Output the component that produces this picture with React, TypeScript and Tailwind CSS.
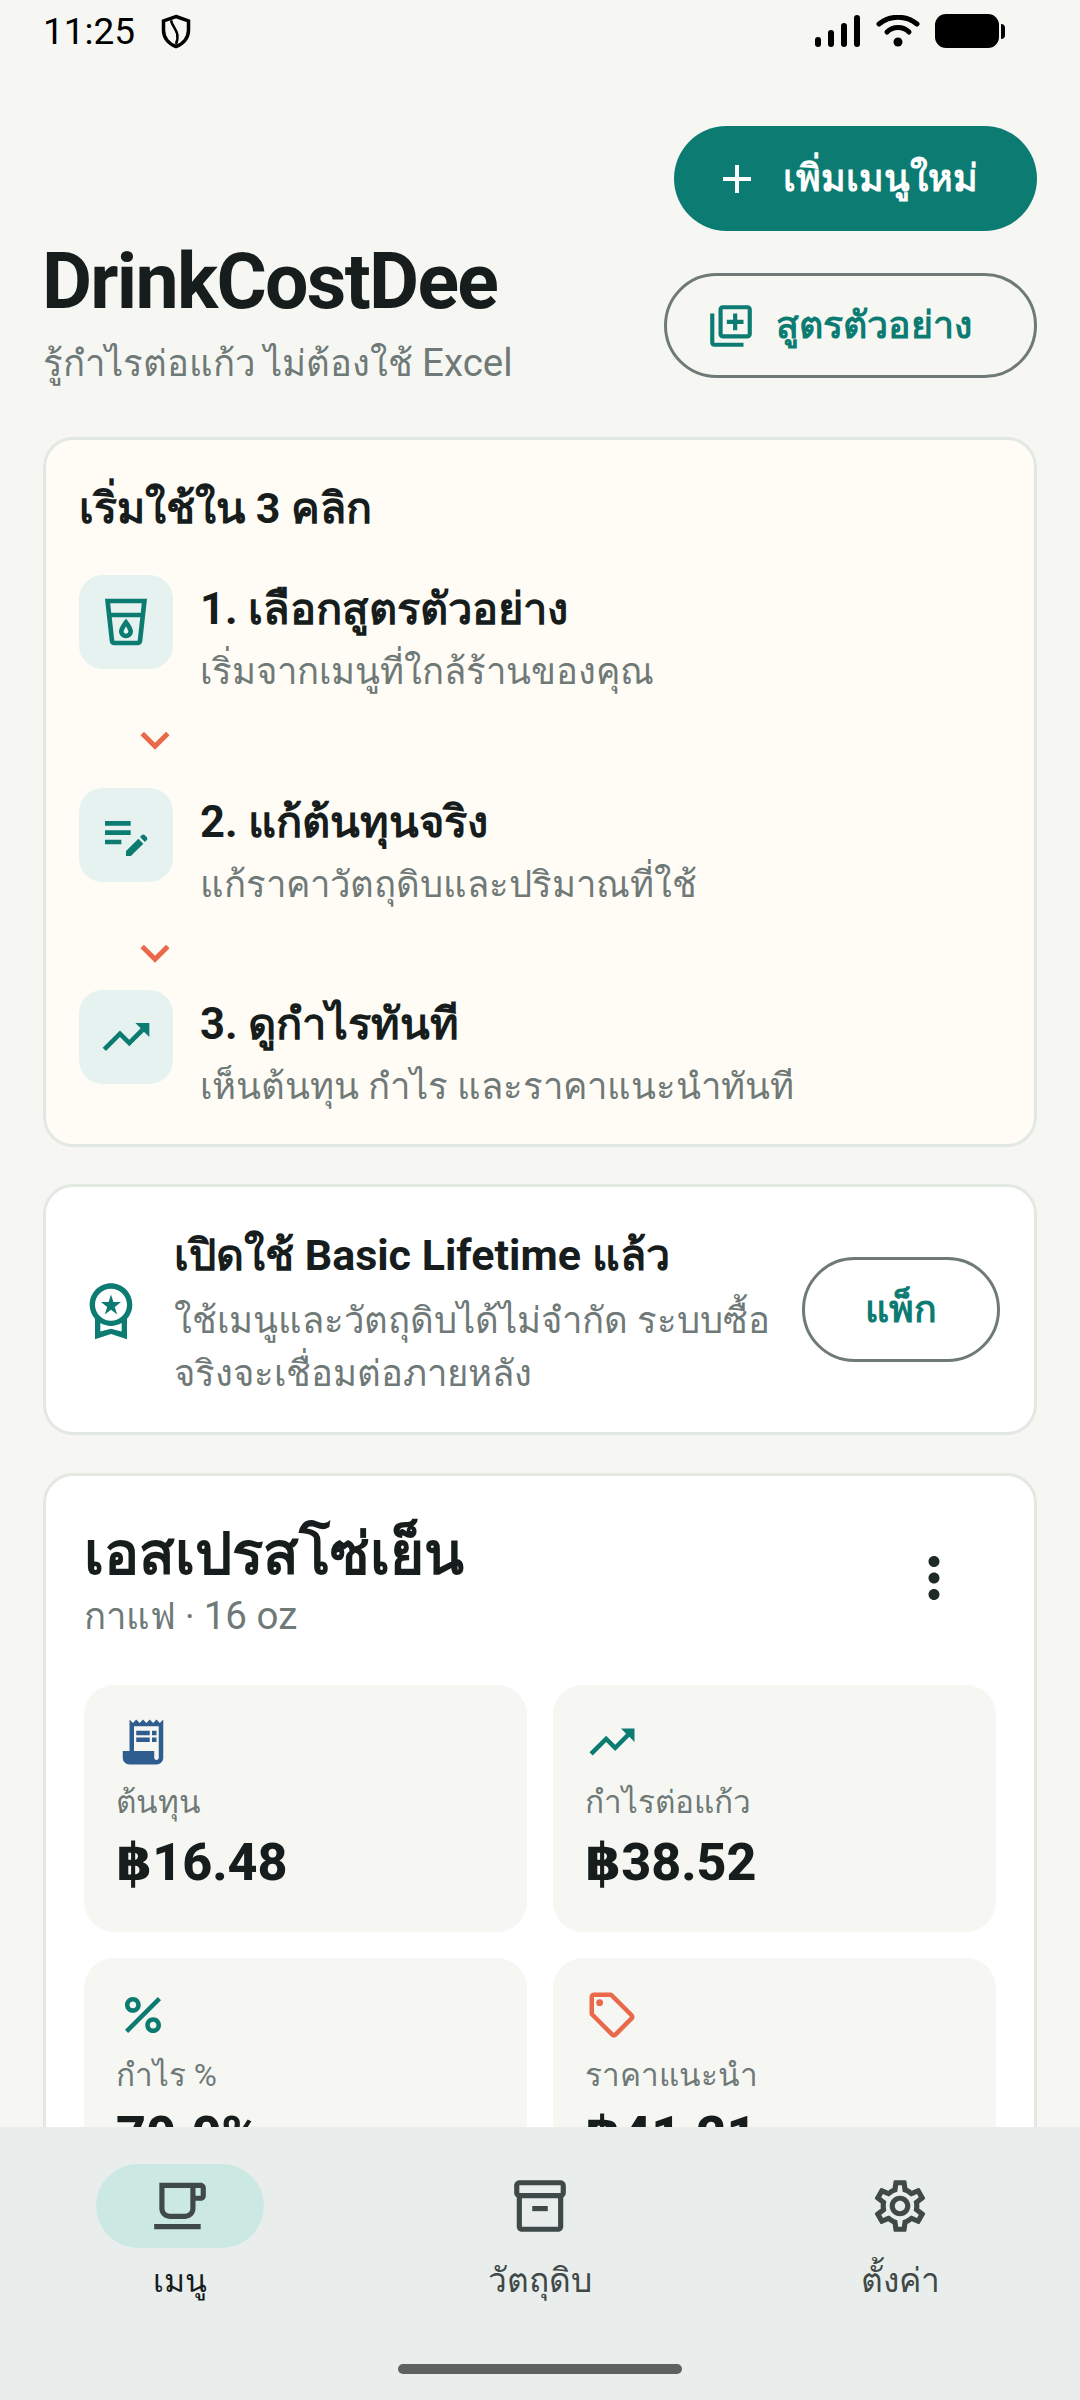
import {
  MdAdd, MdKeyboardArrowDown, MdMoreVert, MdOutlineEditNote, MdOutlineInventory2, MdOutlineLibraryAdd,
  MdOutlineLocalCafe, MdOutlineLocalDrink, MdOutlineSell, MdOutlineSettings, MdOutlineWorkspacePremium, MdPercent,
  MdReceiptLong, MdTrendingUp,
} from 'react-icons/md';

const FONT = 'font-["Roboto","Noto_Sans","DejaVu_Sans",sans-serif]';

const STEPS = [
  { title: '1. เลือกสูตรตัวอย่าง', sub: 'เริ่มจากเมนูที่ใกล้ร้านของคุณ', icon: <MdOutlineLocalDrink size={56} />, chevron: 'pl-[47px] pt-[9px] pb-[19px] text-[#e9694a]' },
  { title: '2. แก้ต้นทุนจริง', sub: 'แก้ราคาวัตถุดิบและปริมาณที่ใช้', icon: <MdOutlineEditNote size={56} />, chevron: 'pl-[47px] pt-[9px] pb-[8px] text-[#e9694a]' },
  { title: '3. ดูกำไรทันที', sub: 'เห็นต้นทุน กำไร และราคาแนะนำทันที', icon: <MdTrendingUp size={56} /> },
];

const STATS = [
  { label: 'ต้นทุน', value: '฿16.48', icon: <MdReceiptLong size={54} className="text-[#2f5d8f]" /> },
  { label: 'กำไรต่อแก้ว', value: '฿38.52', icon: <MdTrendingUp size={54} className="text-[#0c7c72]" /> },
  { label: 'กำไร %', value: '70.0%', icon: <MdPercent size={54} className="text-[#0c7c72]" /> },
  { label: 'ราคาแนะนำ', value: '฿41.21', icon: <MdOutlineSell size={54} className="text-[#e9694a]" /> },
];

const NAV = [
  { label: 'เมนู', icon: <MdOutlineLocalCafe size={62} />, active: true },
  { label: 'วัตถุดิบ', icon: <MdOutlineInventory2 size={62} /> },
  { label: 'ตั้งค่า', icon: <MdOutlineSettings size={62} /> },
];

function StatusBar() {
  return (
    <div className="flex items-center justify-between h-[62px] pl-[43px] pr-[75px] text-black">
      <div className="flex items-center gap-[26px]">
        <span className="text-[37px] leading-none">11:25</span>
        <svg width="30" height="35" viewBox="0 0 24 28" fill="none" stroke="black" strokeWidth="2.8">
          <path d="M12 2 L22 5.5 V13 C22 19 18 24 12 26 C6 24 2 19 2 13 V5.5 Z" />
          <path d="M8 5 C9 11 16 14 12 24" strokeWidth="2" />
        </svg>
      </div>
      <div className="flex items-center gap-[15px]">
        <svg width="46" height="32" viewBox="0 0 46 32" fill="black">
          <rect x="0" y="22" width="6" height="10" rx="3" />
          <rect x="13" y="15" width="6" height="17" rx="3" />
          <rect x="26" y="8" width="6" height="24" rx="3" />
          <rect x="39" y="0" width="6" height="32" rx="3" />
        </svg>
        <svg width="44" height="32" viewBox="0 0 44 32" fill="none" stroke="black" strokeWidth="5" strokeLinecap="round">
          <path d="M3 9 C14 0 30 0 41 9" />
          <path d="M11 17 C17 11 27 11 33 17" />
          <circle cx="22" cy="27" r="4.5" fill="black" stroke="none" />
        </svg>
        <div className="flex items-center">
          <div className="w-[64px] h-[34px] rounded-[11px] bg-black" />
          <div className="w-[4px] h-[15px] ml-[2px] rounded-r-full bg-black" />
        </div>
      </div>
    </div>
  );
}

function Header() {
  return (
    <div className="flex items-end justify-between mt-[64px]">
      <div className="-mb-[10px]">
        <h1 className="-ml-[1px] text-[77px] leading-[82px] tracking-[-1.7px] font-bold text-[#161d1c]">DrinkCostDee</h1>
        <p className="mt-[16px] text-[36.5px] leading-[48px] text-[#6f7977]">
          รู้กำไรต่อแก้ว ไม่ต้องใช้ <span className="text-[38.5px]">Excel</span>
        </p>
      </div>
      <div className="flex flex-col items-end gap-[42px]">
        <button className="flex items-center justify-center gap-[22px] w-[363px] h-[105px] pr-[20px] rounded-full bg-[#0c7c72] text-white text-[37.5px] font-semibold">
          <MdAdd size={48} />
          เพิ่มเมนูใหม่
        </button>
        <button className="flex items-center justify-center gap-[20px] w-[373px] h-[105px] pr-[23px] rounded-full border-[3px] border-[#6f7977] text-[#0c7c72] text-[37.5px] font-semibold">
          <MdOutlineLibraryAdd size={50} />
          สูตรตัวอย่าง
        </button>
      </div>
    </div>
  );
}

function Steps() {
  return (
    <div className="mt-[59px] h-[710px] rounded-[30px] border-[3px] border-[#e3e8e3] bg-[#fffcf5] pl-[33px] pr-[30px] pt-[38px]">
      <h2 className="text-[43px] leading-[60px] font-bold text-[#161d1c]">เริ่มใช้ใน 3 คลิก</h2>
      <div className="mt-[37px]">
        {STEPS.map(s => (
          <div key={s.title}>
            <div className="flex gap-[27px]">
              <div className="flex items-center justify-center w-[94px] h-[94px] rounded-[24px] bg-[#e5f2f0] text-[#0c7c72]">{s.icon}</div>
              <div className="pt-[5px]">
                <div className="text-[43.5px] leading-[60px] font-bold text-[#161d1c]">{s.title}</div>
                <div className="mt-[2px] text-[36.5px] leading-[60px] text-[#6f7977]">{s.sub}</div>
              </div>
            </div>
            {s.chevron && (
              <div className={s.chevron}>
                <MdKeyboardArrowDown size={58} />
              </div>
            )}
          </div>
        ))}
      </div>
    </div>
  );
}

function LifetimeCard() {
  return (
    <div className="flex items-center mt-[37px] h-[251px] rounded-[30px] border-[3px] border-[#e3e8e3] bg-white pl-[33px] pr-[34px]">
      <MdOutlineWorkspacePremium size={64} className="shrink-0 text-[#0c7c72]" />
      <div className="flex-1 min-w-0 ml-[31px] pt-[5px]">
        <div className="text-[43px] leading-[60px] font-bold text-[#161d1c]">เปิดใช้ Basic Lifetime แล้ว</div>
        <div className="mt-[9px] text-[36.5px] leading-[53px] text-[#6f7977]">ใช้เมนูและวัตถุดิบได้ไม่จำกัด ระบบซื้อจริงจะเชื่อมต่อภายหลัง</div>
      </div>
      <button className="ml-[24px] w-[198px] h-[105px] shrink-0 rounded-full border-[3px] border-[#6f7977] text-[#0c7c72] text-[37.5px] font-semibold">แพ็ก</button>
    </div>
  );
}

function MenuCard() {
  return (
    <div className="mt-[38px] rounded-[30px] border-[3px] border-[#e3e8e3] bg-white px-[38px] pt-[40px] pb-[40px]">
      <div className="flex items-start justify-between">
        <div>
          <h3 className="text-[58.5px] leading-[76px] font-bold text-[#161d1c]">เอสเปรสโซ่เย็น</h3>
          <p className="mt-[2px] text-[36.5px] leading-[44px] text-[#6f7977]">กาแฟ · <span className="text-[38.5px]">16 oz</span></p>
        </div>
        <MdMoreVert size={66} className="mt-[29px] mr-[29px] text-[#1f2a28]" />
      </div>
      <div className="grid grid-cols-2 gap-[26px] mt-[46px]">
        {STATS.map(s => (
          <div key={s.label} className="h-[247px] rounded-[30px] bg-[#f6f7f3] px-[32px] pt-[30px]">
            {s.icon}
            <div className="mt-[12px] text-[31.5px] leading-[44px] text-[#6f7977]">{s.label}</div>
            <div className="mt-[5px] text-[52px] leading-[66px] font-extrabold text-[#161d1c]">{s.value}</div>
          </div>
        ))}
      </div>
    </div>
  );
}

function BottomNav() {
  return (
    <div className="absolute left-0 right-0 bottom-0 h-[273px] bg-[#e9eeec]">
      <div className="grid grid-cols-3 pt-[37px]">
        {NAV.map(n => (
          <div key={n.label} className="flex flex-col items-center">
            <div className={n.active ? 'flex items-center justify-center w-[168px] h-[84px] rounded-full bg-[#cce8e3] text-[#3f4947]' : 'flex items-center justify-center w-[168px] h-[84px] rounded-full text-[#3f4947]'}>
              {n.icon}
            </div>
            <span className={n.active ? 'mt-[9px] text-[32px] leading-[48px] text-[#161d1c]' : 'mt-[9px] text-[33.5px] leading-[48px] text-[#3f4947]'}>{n.label}</span>
          </div>
        ))}
      </div>
      <div className="absolute left-[398px] bottom-[26px] w-[284px] h-[10px] rounded-full bg-[#5f6160]" />
    </div>
  );
}

export default function App() {
  return (
    <div className={`relative h-[2400px] overflow-hidden bg-[#f6f7f3] ${FONT}`}>
      <StatusBar />
      <div className="px-[43px]">
        <Header />
        <Steps />
        <LifetimeCard />
        <MenuCard />
      </div>
      <BottomNav />
    </div>
  );
}
